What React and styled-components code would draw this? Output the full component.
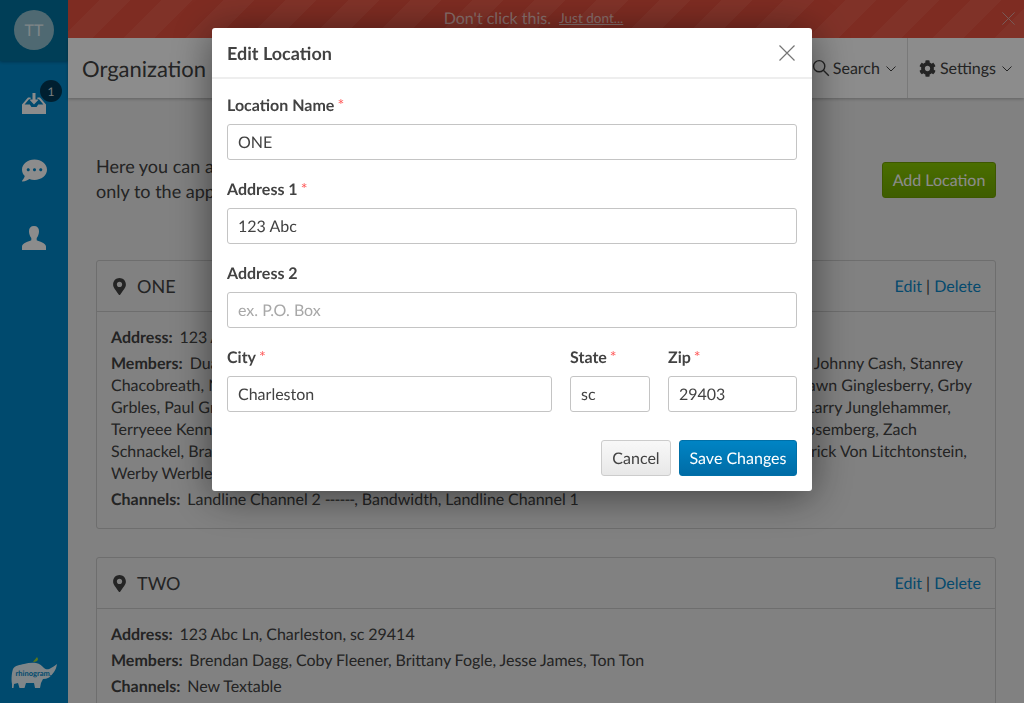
import React from 'react';
import styled, { createGlobalStyle } from 'styled-components';
import { FaCog, FaCommentDots, FaMapMarkerAlt } from 'react-icons/fa';

const GlobalStyle = createGlobalStyle`
  html, body {
    margin: 0;
    height: 100%;
    overflow: hidden;
    font-family: Lato, "Open Sans", sans-serif;
    color: #424242;
    text-rendering: geometricPrecision;
  }
  * { box-sizing: border-box; }
`;

const Shell = styled.div`
  display: flex;
  height: 100vh;
  background: #ebebeb;
`;

const Sidebar = styled.nav`
  width: 68px;
  flex: none;
  display: flex;
  flex-direction: column;
  align-items: center;
  background: #0087c8;
`;

const AvatarBox = styled.div`
  width: 100%;
  height: 61px;
  margin-bottom: 9px;
  padding-top: 10px;
  display: flex;
  justify-content: center;
  background: #00729f;
  box-shadow: 0 1px 3px rgba(0, 0, 0, 0.3);
`;

const Avatar = styled.div`
  width: 40px;
  height: 40px;
  border-radius: 50%;
  display: flex;
  align-items: center;
  justify-content: center;
  background: #90c0cf;
  color: #e8f4f8;
  font-size: 16px;
`;

const NavIcon = styled.div`
  position: relative;
  width: 100%;
  height: 67px;
  display: flex;
  align-items: center;
  justify-content: center;
  color: #fff;
`;

const Badge = styled.span`
  position: absolute;
  top: 10px;
  left: 40px;
  width: 22px;
  height: 22px;
  border-radius: 50%;
  display: flex;
  align-items: center;
  justify-content: center;
  background: #003a58;
  color: #dfe6ea;
  font-size: 12px;
`;

const LogoBox = styled.div`
  margin-top: auto;
  margin-bottom: 13px;
  display: flex;
`;

const Main = styled.div`
  flex: 1;
  min-width: 0;
  display: flex;
  flex-direction: column;
`;

const Banner = styled.div`
  position: relative;
  height: 38px;
  flex: none;
  padding: 0 25px 2px 0;
  display: flex;
  align-items: center;
  justify-content: center;
  gap: 8px;
  color: rgba(255, 255, 255, 0.7);
  font-size: 16px;
  background: repeating-linear-gradient(135deg, #e5503e 0 22px, #ea5c4a 22px 44px);
`;

const BannerLink = styled.a`
  font-size: 13.5px;
  text-decoration: underline;
`;

const BannerClose = styled.span`
  position: absolute;
  right: 9px;
  top: 12px;
  display: flex;
  color: #d9a9a3;
`;

const Header = styled.header`
  height: 60px;
  flex: none;
  display: flex;
  align-items: stretch;
  justify-content: space-between;
  padding-left: 14px;
  background: #fff;
  box-shadow: 0 1px 3px rgba(0, 0, 0, 0.25);
`;

const PageTitle = styled.h1`
  margin: 0;
  align-self: center;
  font-size: 22px;
  font-weight: 400;
  color: #424242;
`;

const HeaderTools = styled.div`
  display: flex;
`;

const HeaderTool = styled.div`
  display: flex;
  align-items: center;
  gap: 3px;
  padding: 0 ${(p) => p.$right}px 0 11px;
  font-size: 16px;
  border-left: 1px solid #ddd;
`;

const GearIcon = styled(FaCog)`
  margin-right: 1px;
`;

const ChevronWrap = styled.span`
  display: flex;
  margin: 2px 0 0 3px;
`;

const Content = styled.main`
  flex: 1;
  min-height: 0;
  overflow: hidden;
  padding: 56px 28px 0;
`;

const IntroRow = styled.div`
  display: flex;
  justify-content: space-between;
  align-items: flex-start;
  margin-bottom: 56px;
`;

const IntroText = styled.p`
  margin: 0;
  font-size: 18px;
  line-height: 25px;
  white-space: nowrap;
`;

const AddButton = styled.button`
  width: 114px;
  height: 36px;
  margin-top: 8px;
  padding: 0;
  border: 1px solid #6f9f00;
  border-radius: 3px;
  background: linear-gradient(#87c800, #72aa00);
  color: #fff;
  font: 400 16px Lato, sans-serif;
  text-rendering: geometricPrecision;
`;

const Card = styled.section`
  border: 1px solid #c8c8c8;
  border-radius: 3px;
  margin-bottom: 28px;
  background: #ebebeb;
`;

const CardHead = styled.div`
  height: 51px;
  display: flex;
  align-items: center;
  justify-content: space-between;
  padding: 0 14px;
  border-bottom: 1px solid #c8c8c8;
`;

const CardTitle = styled.div`
  display: flex;
  align-items: center;
  gap: 9px;
  font-size: 18px;
`;

const CardLinks = styled.div`
  font-size: 16px;
`;

const CardLink = styled.a`
  color: #0a88c8;
`;

const CardBody = styled.div`
  padding: 15px 14px 13px;
`;

const InfoRow = styled.div`
  font-size: 16px;
  line-height: 22px;
  margin-bottom: 4px;
  white-space: nowrap;
  word-spacing: -0.3px;
`;

const InfoLabel = styled.b`
  font-weight: 700;
  margin-right: 3px;
`;

const Dashes = styled.span`
  letter-spacing: -1px;
`;

const MemberLines = styled.div`
  margin-bottom: 4px;
`;

const MemberLine = styled.div`
  display: flex;
  justify-content: space-between;
  font-size: 16px;
  line-height: 22px;
  white-space: nowrap;
  padding-right: ${(p) => p.$end}px;
`;

const Overlay = styled.div`
  position: fixed;
  inset: 0;
  background: rgba(0, 0, 0, 0.45);
`;

const Modal = styled.div`
  width: 600px;
  margin: 28px auto 0;
  background: #fff;
  border-radius: 3px;
  box-shadow: 0 5px 40px rgba(0, 0, 0, 0.5);
`;

const ModalHead = styled.div`
  height: 51px;
  display: flex;
  align-items: center;
  justify-content: space-between;
  padding: 0 17px 0 15px;
  border-bottom: 2px solid #eee;
`;

const ModalTitle = styled.h2`
  margin: 0;
  font-size: 18px;
  font-weight: 700;
  color: #424242;
`;

const CloseIcon = styled.span`
  display: flex;
  color: #757575;
`;

const ModalBody = styled.form`
  padding: 14px 15px 0;
  display: flex;
  flex-direction: column;
  gap: 17px;
`;

const FieldRow = styled.div`
  display: flex;
  gap: 18px;
`;

const Field = styled.div`
  display: flex;
  flex-direction: column;
  gap: 7px;
  width: ${(p) => (p.$width ? `${p.$width}px` : 'auto')};
  flex: ${(p) => (p.$width ? 'none' : 1)};
`;

const Label = styled.label`
  font-size: 16px;
  line-height: 26px;
  height: 24px;
  font-weight: 700;
  color: #424242;
`;

const Required = styled.span`
  margin-left: 3px;
  font-weight: 400;
  color: #ff5a5a;
`;

const Input = styled.input`
  width: 100%;
  height: 36px;
  padding: 0 10px;
  border: 1px solid #c4c4c4;
  border-radius: 3px;
  background: #fff;
  color: #424242;
  font: 400 16px Lato, sans-serif;
  text-rendering: geometricPrecision;
  outline: none;
  &::placeholder { color: #a8a8a8; opacity: 1; }
`;

const ModalFoot = styled.div`
  display: flex;
  justify-content: flex-end;
  gap: 8px;
  padding: 28px 15px 15px;
`;

const Button = styled.button`
  height: 36px;
  width: ${(p) => p.$width}px;
  padding: 0;
  border-radius: 3px;
  font: 400 16px Lato, sans-serif;
  text-rendering: geometricPrecision;
  border: 1px solid ${(p) => (p.$primary ? '#0070a8' : '#ccc')};
  color: ${(p) => (p.$primary ? '#fff' : '#424242')};
  background: ${(p) =>
    p.$primary ? 'linear-gradient(#0084c4, #006ca6)' : 'linear-gradient(#f8f8f8, #e8e8e8)'};
`;

const InboxIcon = () => (
  <svg width="24" height="21" viewBox="0 0 24 21" fill="currentColor">
    <path d="M10.5 0h3v6.5h3.2L12 11.5 7.3 6.5h3.2z" />
    <path d="M6 4.5h2.6v1.6H7.2L2.6 11.5h5.2l1.6 2.6h5.2l1.6-2.6h5.2l-4.6-5.4h-1.4V4.5H18l6 7V21H0v-9.5z" />
  </svg>
);

const UserIcon = () => (
  <svg width="24" height="24" viewBox="0 0 24 24" fill="currentColor">
    <path d="M12 0c3.300 0 5 2 5 5.300 0 2.700-1 5.200-2.300 6.700v2.200c2.300 1 9.300 3 9.300 6.300V24H0v-3.500c0-3.300 7-5.300 9.300-6.300V12C8 10.500 7 8 7 5.300 7 2 8.700 0 12 0z" />
  </svg>
);

const SearchIcon = () => (
  <svg width="18" height="18" viewBox="0 0 18 18" fill="none" stroke="currentColor" strokeWidth="1.4">
    <circle cx="7.2" cy="7.2" r="5.6" />
    <path d="M11.300 11.300l5.500 5.500" />
  </svg>
);

const Chevron = () => (
  <ChevronWrap>
    <svg width="10" height="6" viewBox="0 0 10 6" fill="none" stroke="currentColor" strokeWidth="1">
      <path d="M.5.5L5 5 9.500.5" />
    </svg>
  </ChevronWrap>
);

const CrossIcon = ({ size }) => (
  <svg width={size} height={size} viewBox="0 0 16 16" fill="none" stroke="currentColor" strokeWidth="1.2">
    <path d="M.5.5l15 15M15.500.5l-15 15" />
  </svg>
);

const RhinoLogo = () => (
  <svg width="48" height="34" viewBox="0 0 48 34">
    <path d="M23 6c1-2 3-3 4-5l1 2c0 2-2 3-5 3z" fill="#a8d830" />
    <path
      d="M2 28c-1-6 0-12 1-15 2-4 7-4 11-5 4-1 8-1.500 12-1 4 .5 6 3 8 5 2 2 5 1.500 7 0 2-1 4-2.500 6-4-.5 3-1.500 6-3 8-1.500 2-3 4-5 5.500-2 1-4 1.500-6 1.500l-2 4-1 5h-5l-1-5h-8l-1.500 5h-5L8 27 4 28l-.5 4H2z"
      fill="#e8f4fa"
    />
    <text x="5.500" y="19.500" fontFamily="Lato, sans-serif" fontSize="7.500" fontWeight="700" fill="#0087c8">
      rhinogram.
    </text>
  </svg>
);

const LocationCard = ({ name, children }) => (
  <Card>
    <CardHead>
      <CardTitle>
        <FaMapMarkerAlt size={17} />
        {name}
      </CardTitle>
      <CardLinks>
        <CardLink>Edit</CardLink> | <CardLink>Delete</CardLink>
      </CardLinks>
    </CardHead>
    <CardBody>{children}</CardBody>
  </Card>
);

const Info = ({ label, children }) => (
  <InfoRow>
    <InfoLabel>{label}:</InfoLabel> {children}
  </InfoRow>
);

const memberLines = [
  [<><InfoLabel>Members:</InfoLabel> Duane Allman</>, 'Johnny Cash, Stanrey', 18],
  ['Chacobreath, Nate Dogg', 'Shawn Ginglesberry, Grby', 9],
  ['Grbles, Paul Green', 'Larry Junglehammer,', 30],
  ['Terryeee Kennedy', 'Rosemberg, Zach', 64],
  ['Schnackel, Brad Stone', 'Frick Von Litchtonstein,', 14],
  ['Werby Werble', '', 0],
];

const FormField = ({ label, required, value, placeholder, width }) => (
  <Field $width={width}>
    <Label>
      {label}
      {required && <Required>*</Required>}
    </Label>
    <Input readOnly defaultValue={value} placeholder={placeholder} />
  </Field>
);

const App = () => {
  return (
    <>
      <GlobalStyle />
      <Shell>
        <Sidebar>
          <AvatarBox>
            <Avatar>TT</Avatar>
          </AvatarBox>
          <NavIcon>
            <InboxIcon />
            <Badge>1</Badge>
          </NavIcon>
          <NavIcon>
            <FaCommentDots size={25} />
          </NavIcon>
          <NavIcon>
            <UserIcon />
          </NavIcon>
          <LogoBox>
            <RhinoLogo />
          </LogoBox>
        </Sidebar>
        <Main>
          <Banner>
            <span>Don't click this.</span>
            <BannerLink>Just dont...</BannerLink>
            <BannerClose>
              <CrossIcon size={13} />
            </BannerClose>
          </Banner>
          <Header>
            <PageTitle>Organization Locations</PageTitle>
            <HeaderTools>
              <HeaderTool $right={11}>
                <SearchIcon />
                Search
                <Chevron />
              </HeaderTool>
              <HeaderTool $right={12}>
                <GearIcon size={17} />
                Settings
                <Chevron />
              </HeaderTool>
            </HeaderTools>
          </Header>
          <Content>
            <IntroRow>
              <IntroText>
                Here you can add and edit your organization's locations.
                <br />
                only to the apps and channels assigned to them.
              </IntroText>
              <AddButton>Add Location</AddButton>
            </IntroRow>
            <LocationCard name="ONE">
              <Info label="Address">123 Abc, Charleston, sc 29403</Info>
              <MemberLines>
                {memberLines.map(([left, right, end], i) => (
                  <MemberLine key={i} $end={end}>
                    <span>{left}</span>
                    <span>{right}</span>
                  </MemberLine>
                ))}
              </MemberLines>
              <Info label="Channels">
                Landline Channel 2 <Dashes>------</Dashes>, Bandwidth, Landline Channel 1
              </Info>
            </LocationCard>
            <LocationCard name="TWO">
              <Info label="Address">123 Abc Ln, Charleston, sc 29414</Info>
              <Info label="Members">Brendan Dagg, Coby Fleener, Brittany Fogle, Jesse James, Ton Ton</Info>
              <Info label="Channels">New Textable</Info>
            </LocationCard>
          </Content>
        </Main>
      </Shell>
      <Overlay>
        <Modal>
          <ModalHead>
            <ModalTitle>Edit Location</ModalTitle>
            <CloseIcon>
              <CrossIcon size={16} />
            </CloseIcon>
          </ModalHead>
          <ModalBody>
            <FormField label="Location Name" required value="ONE" />
            <FormField label="Address 1" required value="123 Abc" />
            <FormField label="Address 2" placeholder="ex. P.O. Box" />
            <FieldRow>
              <FormField label="City" required value="Charleston" />
              <FormField label="State" required value="sc" width={80} />
              <FormField label="Zip" required value="29403" width={129} />
            </FieldRow>
          </ModalBody>
          <ModalFoot>
            <Button $width={70}>Cancel</Button>
            <Button $primary $width={118}>Save Changes</Button>
          </ModalFoot>
        </Modal>
      </Overlay>
    </>
  );
};

export default App;
